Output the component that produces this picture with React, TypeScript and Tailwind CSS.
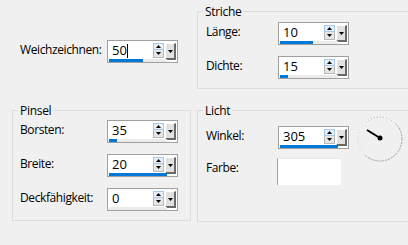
import React from "react";

function Arrow({ dir }: { dir: "up" | "down" }) {
  return (
    <svg width="5" height="3" viewBox="0 0 5 3" className="block">
      {dir === "up" ? <polygon points="2.5,0 5,3 0,3" fill="#000" /> : <polygon points="0,0 5,0 2.5,3" fill="#000" />}
    </svg>
  );
}

function Spin({ value, bar, caret }: { value: string; bar: number; caret?: boolean }) {
  return (
    <div className="w-[71px] h-[23px] border border-[#a0a0a0] bg-white pt-[1px] flex flex-col shrink-0">
      <div className="h-[17px] flex pr-[1px]">
        <div className="flex-1 pl-[4px] text-[13px] leading-[17px] text-black flex items-center">
          <span>{value}</span>
          {caret && <span className="w-px h-[14px] bg-black" />}
        </div>
        <div className="w-[11px] h-[15px] mt-[1px] flex flex-col bg-[#e6e6e6]">
          <div className="h-[7px] border border-[#a8c8e8] bg-[#e8f1fb] flex items-center justify-center">
            <Arrow dir="up" />
          </div>
          <div className="h-[8px] border border-[#b8b8b8] border-t-0 flex items-center justify-center">
            <Arrow dir="down" />
          </div>
        </div>
        <div className="w-[11px] h-[17px] ml-[1px] mt-[1px] bg-[#e1e1e1] border-l border-t border-l-white border-t-white border-r-2 border-b-2 border-r-[#696969] border-b-[#696969] flex items-center justify-center">
          <Arrow dir="down" />
        </div>
      </div>
      <div className="ml-px w-[58px] h-[3px] bg-[#ebebeb]">
        <div className="h-full bg-[#0078d7]" style={{ width: bar }} />
      </div>
    </div>
  );
}

function Row({ label, labelW, children }: { label: string; labelW: string; children: React.ReactNode }) {
  return (
    <div className="flex items-start">
      <div className={`${labelW} pt-[2px] leading-[15px] text-[12px] tracking-[-0.4px] text-black whitespace-nowrap`}>{label}</div>
      {children}
    </div>
  );
}

function Title({ children }: { children: React.ReactNode }) {
  return (
    <div className="-mt-[8px] ml-[5px] px-[2px] w-fit bg-[#f0f0f0] leading-[15px] text-[12px] tracking-[-0.3px] text-black">
      {children}
    </div>
  );
}

export default function App() {
  return (
    <div className="w-[408px] h-[245px] bg-[#f0f0f0] overflow-hidden flex font-['Open_Sans','Noto_Sans',sans-serif] text-[12px]">
      <div className="w-[197px] shrink-0 pt-[40px] pl-[12px]">
        <div className="pl-[8px]">
          <Row label="Weichzeichnen:" labelW="w-[87px]">
            <Spin value="50" bar={34} caret />
          </Row>
        </div>
        <div className="mt-[47px] w-[179px] h-[111px] border border-[#dcdcdc]">
          <Title>Pinsel</Title>
          <div className="mt-[2px] pl-[7px] flex flex-col gap-[11px]">
            <Row label="Borsten:" labelW="w-[87px]">
              <Spin value="35" bar={8} />
            </Row>
            <Row label="Breite:" labelW="w-[87px]">
              <Spin value="20" bar={58} />
            </Row>
            <Row label="Deckfähigkeit:" labelW="w-[87px]">
              <Spin value="0" bar={0} />
            </Row>
          </div>
        </div>
      </div>
      <div className="shrink-0 pt-[11px]">
        <div className="w-[220px] h-[78px] border border-[#dcdcdc]">
          <Title>Striche</Title>
          <div className="mt-[3px] pl-[8px] flex flex-col gap-[11px]">
            <Row label="Länge:" labelW="w-[72px]">
              <Spin value="10" bar={33} />
            </Row>
            <Row label="Dichte:" labelW="w-[72px]">
              <Spin value="15" bar={8} />
            </Row>
          </div>
        </div>
        <div className="mt-[21px] w-[220px] h-[112px] border border-[#dcdcdc]">
          <Title>Licht</Title>
          <div className="flex pl-[8px]">
            <div className="mt-[8px] flex flex-col gap-[9px]">
              <Row label="Winkel:" labelW="w-[72px]">
                <Spin value="305" bar={58} />
              </Row>
              <Row label="Farbe:" labelW="w-[71px]">
                <div className="w-[64px] h-[27px] bg-white border-l border-t border-l-[#a0a0a0] border-t-[#e8e8e8]" />
              </Row>
            </div>
            <svg width="46" height="46" viewBox="0 0 46 46" className="ml-[8px] -mt-[2px] shrink-0">
              <circle cx="23" cy="23" r="22" fill="none" stroke="#a0a0a0" strokeWidth="1" strokeDasharray="2 1" />
              <path d="M 7.4 7.4 A 22 22 0 0 1 38.6 7.4" fill="none" stroke="#ffffff" strokeWidth="1.2" strokeDasharray="2 1" />
              <path d="M 7.4 7.4 A 22 22 0 0 0 7.4 38.6" fill="none" stroke="#ffffff" strokeWidth="1.2" strokeDasharray="2 1" />
              <line x1="10" y1="14" x2="23" y2="22" stroke="#000" strokeWidth="2" />
              <circle cx="23" cy="22" r="2.5" fill="#000" />
            </svg>
          </div>
        </div>
      </div>
    </div>
  );
}
